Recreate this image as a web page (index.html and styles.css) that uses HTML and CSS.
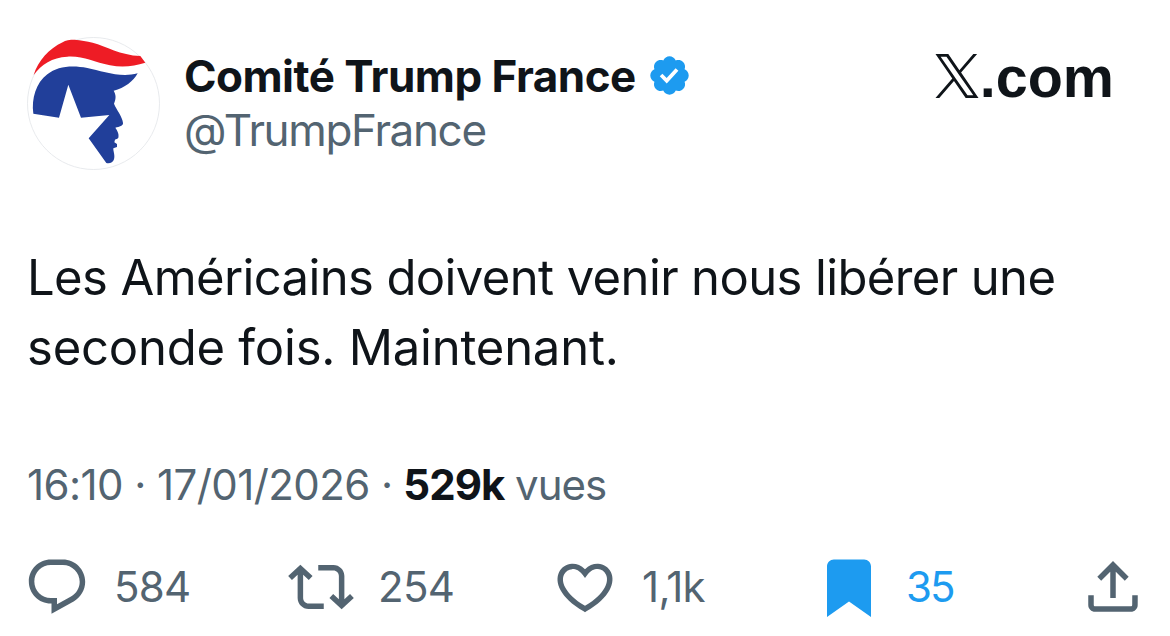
FILE: index.html
```html
<!DOCTYPE html>
<html lang="fr">
<head>
    <meta charset="UTF-8">
    <title>Comité Trump France</title>
    <meta name="viewport" content="width=device-width, initial-scale=1.0">
    <link rel="stylesheet" href="styles.css">
</head>
<body>
    <article class="post">
        <header class="post-header">
            <svg class="avatar" viewBox="21 20 399 399">
                <circle cx="220.500" cy="219.500" r="198" fill="#fff" stroke="#e3e6e9" stroke-width="2.500"/>
                <path fill="#ee1c25" d="M41 134C54 92 88 54 128 36C136 29 150 28 163 28C184 29 200 33 218 37C259 48 300 74 361 77L376 97C342 108 308 112 270 105C222 96 190 76 142 79C96 82 65 101 41 134Z"/>
                <path fill="#213f9a" d="M40 250C34 205 48 157 82 132C112 108 155 104 202 113C246 122 300 143 353 129C340 153 314 173 281 181C288 193 289 203 282 220C290 239 307 258 309 278C310 287 298 289 286 292C291 299 298 310 295 322C293 326 288 326 285 328L283 336L291 341V350L280 354C279 362 286 375 282 387C279 397 269 400 259 398L206 324L268 254L183 262L145 163L117 262Z"/>
            </svg>
            <div class="author">
                <div class="name-row">
                    <span class="name">Comité Trump France</span>
                    <svg class="verified" viewBox="0 0 22 22"><path d="M20.396 11c-.018-.646-.215-1.275-.57-1.816-.354-.54-.852-.972-1.438-1.246.223-.607.27-1.264.14-1.897-.131-.634-.437-1.218-.882-1.687-.47-.445-1.053-.75-1.687-.882-.633-.13-1.29-.083-1.897.14-.273-.587-.704-1.086-1.245-1.44S11.647 1.62 11 1.604c-.646.017-1.273.213-1.813.568s-.969.854-1.24 1.44c-.608-.223-1.267-.272-1.902-.14-.635.13-1.22.436-1.69.882-.445.47-.749 1.055-.878 1.688-.13.633-.08 1.29.144 1.896-.587.274-1.087.705-1.443 1.245-.356.54-.555 1.17-.574 1.817.02.647.218 1.276.574 1.817.356.54.856.972 1.443 1.245-.224.606-.274 1.263-.144 1.896.13.634.433 1.218.877 1.688.47.443 1.054.747 1.687.878.633.132 1.29.084 1.897-.136.274.586.705 1.084 1.246 1.439.54.354 1.17.551 1.816.569.647-.016 1.276-.213 1.817-.567s.972-.854 1.245-1.44c.604.239 1.266.296 1.903.164.636-.132 1.22-.447 1.68-.907.46-.46.776-1.044.908-1.681s.075-1.299-.165-1.903c.586-.274 1.084-.705 1.439-1.246.354-.54.551-1.17.569-1.816zM9.662 14.850l-3.429-3.428 1.293-1.302 2.072 2.072 4.400-4.794 1.347 1.246z"/></svg>
                </div>
                <div class="handle">@TrumpFrance</div>
            </div>
            <div class="brand">
                <svg class="brand-logo" viewBox="0 0 1200 1227"><path d="M714.163 519.284L1160.890 0H1055.030L667.137 450.887L357.328 0H0L468.492 681.821L0 1226.370H105.866L515.491 750.218L842.672 1226.370H1200L714.137 519.284H714.163ZM569.165 687.828L521.697 619.934L144.011 79.694H306.615L611.412 515.685L658.880 583.579L1055.080 1150.300H892.476L569.165 687.854V687.828Z"/></svg>
                <span>.com</span>
            </div>
        </header>

        <p class="post-text">
            <span class="line-1">Les Américains doivent venir nous libérer une</span><br>
            <span class="line-2">seconde fois. Maintenant.</span>
        </p>

        <div class="meta"><span class="date">16:10 · 17/01/2026 ·</span> <strong>529k</strong> <span class="views">vues</span></div>

        <div class="actions">
            <div class="action reply">
                <svg viewBox="0 0 24 24"><path d="M1.751 10c0-4.420 3.584-8 8.005-8h4.366c4.490 0 8.129 3.640 8.129 8.130 0 2.960-1.607 5.680-4.196 7.110l-8.054 4.460v-3.690h-.067c-4.490.1-8.183-3.510-8.183-8.010zm8.005-6c-3.317 0-6.005 2.690-6.005 6 0 3.370 2.770 6.080 6.138 6.010l.351-.01h1.761v2.300l5.087-2.810c1.951-1.080 3.163-3.130 3.163-5.360 0-3.390-2.744-6.130-6.129-6.130H9.756z"/></svg>
                <span>584</span>
            </div>
            <div class="action repost">
                <svg viewBox="0 0 24 24"><path d="M4.500 3.880l4.432 4.140-1.364 1.460L5.500 7.550V16c0 1.100.896 2 2 2H13v2H7.500c-2.209 0-4-1.790-4-4V7.550L1.432 9.480.068 8.020 4.500 3.880zM16.500 6H11V4h5.500c2.209 0 4 1.790 4 4v8.450l2.068-1.930 1.364 1.460-4.432 4.140-4.432-4.140 1.364-1.460 2.068 1.930V8c0-1.100-.896-2-2-2z"/></svg>
                <span>254</span>
            </div>
            <div class="action like">
                <svg viewBox="0 0 24 24"><path d="M16.697 5.500c-1.222-.06-2.679.51-3.890 2.160l-.805 1.090-.806-1.090C9.984 6.010 8.526 5.440 7.304 5.500c-1.243.07-2.349.78-2.910 1.910-.552 1.120-.633 2.780.479 4.820 1.074 1.970 3.257 4.270 7.129 6.610 3.870-2.340 6.052-4.640 7.126-6.610 1.111-2.040 1.030-3.700.477-4.820-.561-1.130-1.666-1.840-2.908-1.910zm4.187 7.690c-1.351 2.480-4.001 5.120-8.379 7.670l-.503.3-.504-.3c-4.379-2.550-7.029-5.190-8.382-7.670-1.360-2.500-1.410-4.860-.514-6.670.887-1.790 2.647-2.910 4.601-3.010 1.651-.09 3.368.56 4.798 2.010 1.429-1.450 3.146-2.100 4.796-2.010 1.954.1 3.714 1.220 4.601 3.010.896 1.810.846 4.170-.514 6.670z"/></svg>
                <span>1,1k</span>
            </div>
            <div class="action bookmark">
                <svg viewBox="0 0 24 24"><path d="M4 4.500C4 3.120 5.119 2 6.500 2h11C18.881 2 20 3.120 20 4.500v18.440l-8-5.710-8 5.710V4.500z"/></svg>
                <span>35</span>
            </div>
            <div class="action share">
                <svg viewBox="0 0 24 24"><path d="M12 2.590l5.700 5.700-1.410 1.420L13 6.410V16h-2V6.410l-3.300 3.300-1.410-1.420L12 2.590zM21 15l-.02 3.510c0 1.380-1.120 2.490-2.500 2.490H5.500C4.110 21 3 19.880 3 18.500V15h2v3.500c0 .28.22.5.5.5h12.980c.28 0 .5-.22.5-.5L19 15h2z"/></svg>
            </div>
        </div>
    </article>
</body>
</html>
```

FILE: styles.css
```css
body {
    margin: 0;
    background-color: #fff;
    color: #0f1419;
    font-family: Inter, "Liberation Sans", sans-serif;
}

svg {
    display: block;
    flex-shrink: 0;
}

.post {
    box-sizing: border-box;
    width: 1170px;
    height: 636px;
    padding: 37px 24px 0 27px;
    overflow: hidden;
}

.post-header {
    display: flex;
    align-items: flex-start;
    height: 133px;
}

.avatar {
    width: 133px;
    height: 133px;
}

.author {
    margin: 12px 0 0 24px;
}

.name-row {
    display: flex;
    align-items: center;
    height: 54px;
}

.name {
    font-size: 44px;
    font-weight: 700;
    letter-spacing: -0.53px;
    white-space: nowrap;
}

.verified {
    width: 45px;
    height: 45px;
    margin: 0 0 2px 11px;
    fill: #1d9bf0;
}

.handle {
    font-size: 44px;
    line-height: 54px;
    letter-spacing: -1.35px;
    color: #536471;
}

.brand {
    display: flex;
    align-items: flex-start;
    margin: 17px 32px 0 auto;
    font-family: "Liberation Sans", Arial, sans-serif;
    font-size: 57.5px;
    font-weight: 700;
    line-height: 46px;
}

.brand-logo {
    width: 44px;
    height: 44px;
    margin-right: 1px;
    fill: #0f1419;
}

.post-text {
    margin: 73px 0 0;
    font-size: 49px;
    line-height: 70px;
    white-space: nowrap;
}

.line-1 {
    letter-spacing: -0.62px;
}

.line-2 {
    letter-spacing: -0.22px;
}

.meta {
    margin-top: 75px;
    font-size: 42px;
    line-height: 54px;
    letter-spacing: -1px;
    color: #536471;
    white-space: nowrap;
}

.date {
    letter-spacing: -0.57px;
}

.meta strong {
    font-weight: 700;
    color: #0f1419;
}

.actions {
    display: flex;
    align-items: center;
    margin: 42px 0 0 -3px;
}

.action {
    display: flex;
    align-items: center;
    gap: 24px;
    width: 264px;
    height: 66px;
    font-size: 42px;
    letter-spacing: -0.7px;
    color: #536471;
}

.action span {
    padding-bottom: 2px;
}

.action svg {
    width: 66px;
    height: 66px;
    fill: currentColor;
}

.bookmark {
    color: #1d9bf0;
    letter-spacing: -2px;
}

.share {
    width: 66px;
}
```
